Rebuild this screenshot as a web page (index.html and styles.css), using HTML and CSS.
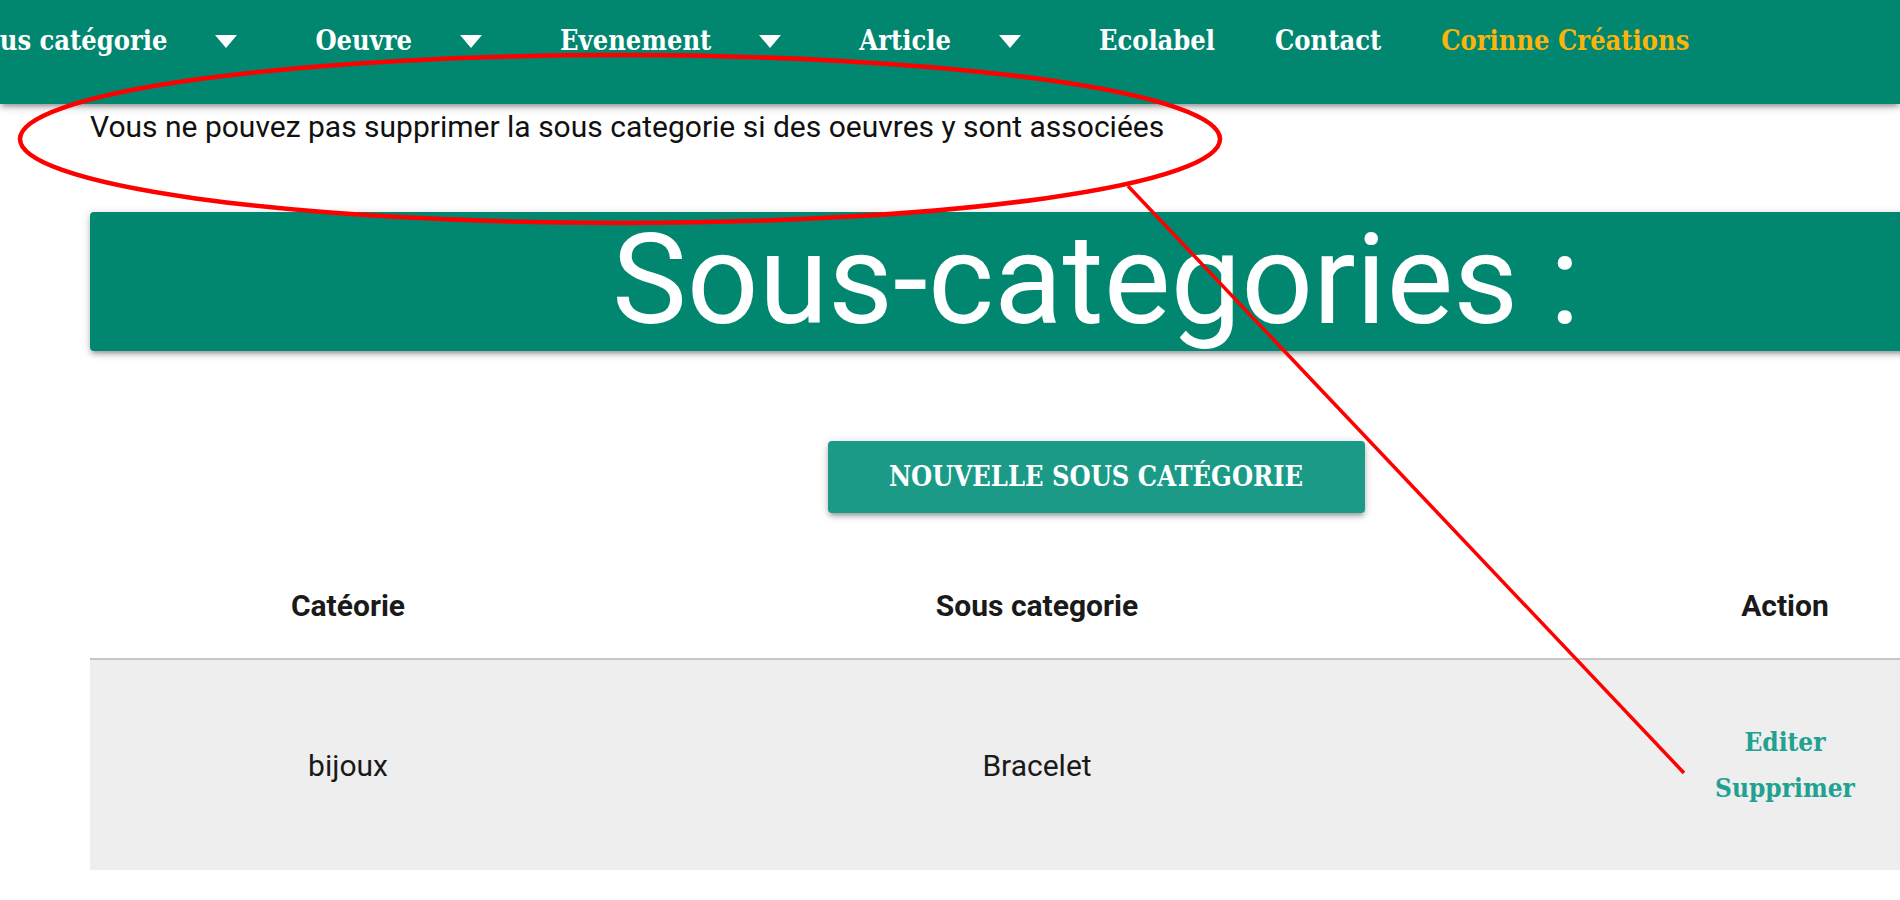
FILE: index.html
```html
<!DOCTYPE html>
<html lang="fr">
<head>
<meta charset="utf-8">
<title>Sous-categories</title>
<link rel="stylesheet" href="styles.css">
</head>
<body>
<nav class="nav">
  <ul class="nav-list">
    <li class="nav-item"><a class="nav-link" href="#">Sous catégorie<span class="caret"></span></a></li>
    <li class="nav-item"><a class="nav-link" href="#">Oeuvre<span class="caret"></span></a></li>
    <li class="nav-item"><a class="nav-link" href="#">Evenement<span class="caret"></span></a></li>
    <li class="nav-item"><a class="nav-link" href="#">Article<span class="caret"></span></a></li>
    <li class="nav-item"><a class="nav-link" href="#">Ecolabel</a></li>
    <li class="nav-item"><a class="nav-link" href="#">Contact</a></li>
    <li class="nav-item"><a class="nav-link brand" href="#">Corinne Créations</a></li>
  </ul>
</nav>
<main class="main">
  <p class="notice">Vous ne pouvez pas supprimer la sous categorie si des oeuvres y sont associées</p>
  <h1 class="title-box">Sous-categories :</h1>
  <div class="actions"><a class="btn" href="#">Nouvelle sous catégorie</a></div>
  <table class="table">
    <thead>
      <tr><th class="c1">Catéorie</th><th class="c2">Sous categorie</th><th class="c3">Action</th></tr>
    </thead>
    <tbody>
      <tr>
        <td>bijoux</td>
        <td>Bracelet</td>
        <td><a class="link" href="#">Editer</a><a class="link" href="#">Supprimer</a></td>
      </tr>
    </tbody>
  </table>
</main>
<svg class="annot" width="1900" height="900" viewBox="0 0 1900 900">
  <ellipse cx="620" cy="139" rx="600" ry="84" fill="none" stroke="#ff0000" stroke-width="4.5"/>
  <line x1="1128" y1="186" x2="1684" y2="773" stroke="#ff0000" stroke-width="3.5"/>
</svg>
</body>
</html>
```
FILE: styles.css
```css
html, body {
  margin: 0;
  padding: 0;
  overflow: hidden;
  background: #fff;
}
body {
  font-family: Roboto, "Liberation Sans", sans-serif;
  color: rgba(0,0,0,0.87);
  width: 1900px;
  height: 900px;
  position: relative;
}
.nav {
  height: 104px;
  background: #01866f;
  box-shadow: 0 4px 4px 0 rgba(0,0,0,0.14), 0 6px 2px -4px rgba(0,0,0,0.12), 0 2px 10px 0 rgba(0,0,0,0.2);
  position: relative;
  z-index: 2;
}
.nav-list {
  list-style: none;
  margin: 0 0 0 -64px;
  padding: 0;
  display: flex;
  white-space: nowrap;
}
.nav-item {
  padding: 0 30px;
}
.nav-link {
  display: flex;
  align-items: center;
  height: 82px;
  line-height: 82px;
  color: #fff;
  text-decoration: none;
  font-family: "DejaVu Serif Condensed", "DejaVu Serif", serif;
  font-stretch: condensed;
  font-weight: bold;
  font-size: 27px;
}
.brand {
  color: #fbb40a;
}
.caret {
  display: inline-block;
  width: 0;
  height: 0;
  border-left: 11.5px solid transparent;
  border-right: 11.5px solid transparent;
  border-top: 13px solid #fff;
  margin-left: 48px;
  margin-right: 18px;
}
.main {
  margin-left: 90px;
  width: 2012px;
}
.notice {
  margin: 0;
  font-size: 30px;
  line-height: 45px;
  color: #111;
}
.title-box {
  margin: 63px 0 0;
  height: 139px;
  box-sizing: border-box;
  background: #01866f;
  color: #fff;
  border-radius: 4px;
  font-weight: 400;
  font-size: 126px;
  line-height: 136px;
  text-align: center;
  box-shadow: 0 4px 4px 0 rgba(0,0,0,0.14), 0 6px 2px -4px rgba(0,0,0,0.12), 0 2px 10px 0 rgba(0,0,0,0.2);
}
.actions {
  margin-top: 90px;
  display: flex;
  justify-content: center;
}
.btn {
  display: block;
  width: 537px;
  height: 72px;
  line-height: 72px;
  text-align: center;
  background: #1b9a87;
  color: #fff;
  text-decoration: none;
  text-transform: uppercase;
  font-family: "DejaVu Serif Condensed", "DejaVu Serif", serif;
  font-stretch: condensed;
  font-weight: bold;
  font-size: 27px;
  border-radius: 4px;
  box-shadow: 0 4px 4px 0 rgba(0,0,0,0.14), 0 6px 2px -4px rgba(0,0,0,0.12), 0 2px 10px 0 rgba(0,0,0,0.2);
}
.table {
  margin-top: 40px;
  width: 2012px;
  border-collapse: collapse;
  table-layout: fixed;
}
.c1 { width: 496px; }
.c2 { width: 842px; }
.c3 { width: 614px; }
.table th {
  font-size: 30px;
  line-height: 45px;
  font-weight: bold;
  padding: 30px 10px;
  text-align: center;
  color: #1a1a1a;
}
.table thead tr {
  border-bottom: 2px solid #c6c6c6;
}
.table tbody tr {
  background: #eeeeee;
  height: 211px;
}
.table td {
  font-size: 30px;
  line-height: 45px;
  text-align: center;
  vertical-align: middle;
  padding: 0 10px;
  color: #1a1a1a;
}
.link {
  display: block;
  color: #21a191;
  text-decoration: none;
  font-family: "DejaVu Serif Condensed", "DejaVu Serif", serif;
  font-stretch: condensed;
  font-weight: bold;
  font-size: 26px;
  line-height: 46px;
}
.annot {
  position: absolute;
  left: 0;
  top: 0;
  z-index: 5;
  pointer-events: none;
}
```
